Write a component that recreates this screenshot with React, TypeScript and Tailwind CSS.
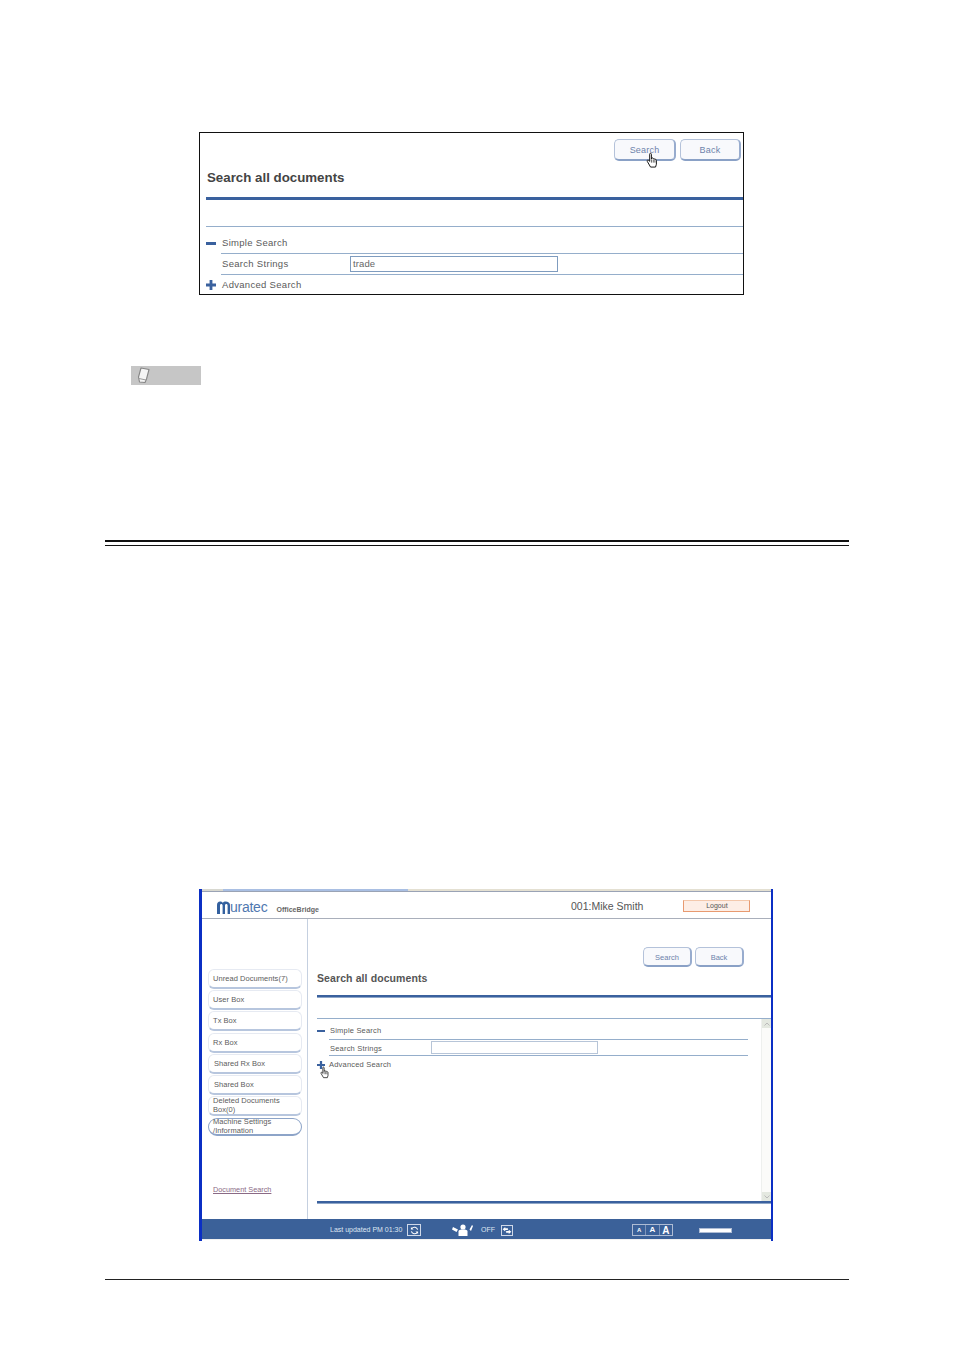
import React from "react";

const font = "font-['Liberation_Sans',Arial,sans-serif]";

function Hand({ className }: { className: string }) {
  return (
    <svg viewBox="0 0 12 16" className={className}>
      <path
        d="M3.5 1.2c.7-.6 1.5-.2 1.5.6v4.4l.3-.9c.8-.4 1.3 0 1.4.6.7-.4 1.3-.1 1.4.6.8-.3 1.5.1 1.5.9v3.6l-.8 2.6H4.2L1.2 8.4c-.5-.8.3-1.6 1.1-1l1.1.9V1.8z"
        fill="#fff"
        stroke="#111"
        strokeWidth="0.9"
        strokeLinejoin="round"
      />
      <path d="M5 6.5v3M6.7 6.5v3M8.2 7v2.5" stroke="#111" strokeWidth="0.6" fill="none" />
    </svg>
  );
}

function Plus({ className }: { className: string }) {
  return (
    <svg viewBox="0 0 10 10" className={className}>
      <path d="M3.6 0h2.8v3.6H10v2.8H6.4V10H3.6V6.4H0V3.6h3.6z" fill="#3a619e" />
    </svg>
  );
}

function ActionButton({ label, cls }: { label: string; cls: string }) {
  return (
    <div
      className={`flex items-center justify-center pt-[2px] rounded-[5px] border border-[#b4c2da] border-b-2 border-r-2 border-b-[#8aa1c6] border-r-[#98acce] bg-[#f8f9fc] text-[#6d83ab] ${cls}`}
    >
      {label}
    </div>
  );
}

const sideItems: { label: string; cls: string }[] = [
  { label: "Unread Documents(7)", cls: "h-[20px] pl-[4px]" },
  { label: "User Box", cls: "h-[20px] mt-[1px] pl-[4px]" },
  { label: "Tx Box", cls: "h-[20px] mt-[1px] pl-[4px]" },
  { label: "Rx Box", cls: "h-[20px] mt-[2px] pl-[4px]" },
  { label: "Shared Rx Box", cls: "h-[20px] mt-[1px] pl-[5px]" },
  { label: "Shared Box", cls: "h-[20px] mt-[1px] pl-[5px]" },
  { label: "Deleted Documents Box(0)", cls: "h-[20px] mt-[1px] pl-[4px] pb-[2px]" },
];

export default function App() {
  return (
    <div className={`w-[954px] h-[1347px] bg-white overflow-hidden pt-[132px] ${font}`}>
      {/* First capture */}
      <div className="relative ml-[199px] w-[545px] h-[163px] border border-[#111] flex flex-col text-[#5a5a5a] text-[9.5px] tracking-[0.3px]">
        <div className="mt-[6px] flex justify-end gap-[4px] pr-[2px] text-[9px] tracking-[0.2px]">
          <ActionButton label="Search" cls="w-[62px] h-[22px]" />
          <ActionButton label="Back" cls="w-[61px] h-[22px]" />
        </div>
        <div className="h-[36px] pt-[9px] pl-[7px] text-[13.3px] leading-[16px] font-bold tracking-normal text-[#444]">
          Search all documents
        </div>
        <div className="ml-[6px] h-[3px] bg-[#3a619e]" />
        <div className="h-[26px] ml-[6px] border-b border-[#95aecb] box-content" />
        <div className="h-[26px] pt-[6px] flex items-center pl-[6px]">
          <div className="w-[10px] h-[3px] bg-[#3a619e]" />
          <span className="ml-[6px]">Simple Search</span>
        </div>
        <div className="ml-[21px] h-px bg-[#95aecb]" />
        <div className="h-[20px] flex items-center pl-[22px]">
          <span className="w-[128px]">Search Strings</span>
          <div className="w-[208px] h-[16px] border border-[#7f9cbf] pl-[2px] leading-[14px] tracking-[0.1px] text-[#666]">trade</div>
        </div>
        <div className="ml-[21px] h-px bg-[#95aecb]" />
        <div className="h-[19px] flex items-center pl-[6px] pt-[2px]">
          <Plus className="w-[10px] h-[10px] -mt-[2px]" />
          <span className="ml-[6px]">Advanced Search</span>
        </div>
        <Hand className="absolute left-[446px] top-[19px] w-[13px] h-[18px]" />
      </div>

      {/* Note marker */}
      <div className="mt-[71px] ml-[131px] w-[70px] h-[19px] bg-[#c6c6c6] flex items-center pl-[6px]">
        <svg viewBox="0 0 13 17" className="w-[13px] h-[17px]">
          <path d="M4 1 12 2.5 9.5 12 8 15.5 2.5 15 1.5 10z" fill="#f4f4f4" stroke="#858585" strokeWidth="1.1" strokeLinejoin="round" />
          <path d="M2 11.5 9 13" stroke="#9a9a9a" strokeWidth="1" />
        </svg>
      </div>

      {/* Section rule */}
      <div className="mt-[155px] ml-[105px] w-[744px] h-[2px] bg-[#111]" />
      <div className="mt-[3px] ml-[105px] w-[744px] h-px bg-[#111]" />

      {/* Second capture */}
      <div className="relative mt-[343px] ml-[199px] w-[574px] h-[352px] border-l-[3px] border-r-[2px] border-l-[#0b2fc4] border-r-[#0b2fc4] flex flex-col text-[#5a5a5a]">
        <div className="h-[2px] flex">
          <div className="w-[21px] bg-[#d8d8d0]" />
          <div className="w-[185px] bg-[#a9bfe3]" />
          <div className="flex-1 bg-[#e4e0d2]" />
        </div>
        {/* Header */}
        <div className="h-[28px] border-b border-t border-t-[#9aa3b5] border-b-[#a9afbb] flex items-center pt-[2px]">
          <div className="ml-[15px] mt-[2px] flex items-center text-[#4f78b0]">
            <svg viewBox="0 0 13 13" className="w-[13px] h-[13px]">
              <path d="M0 13V4C0 1.6 1.2.4 3 .4c1.2 0 2.2.5 2.8 1.4C6.4.9 7.4.4 8.7.4 11 .4 13 1.6 13 4v9h-2.4V4.5c0-1-.5-1.6-1.3-1.6s-1.3.6-1.3 1.6V13H5.6V4.5c0-1-.5-1.6-1.3-1.6S3 3.5 3 4.5V13z" fill="#33609f" />
            </svg>
            <span className="text-[14px] leading-[14px] tracking-[-0.25px]">uratec</span>
          </div>
          <span className="ml-[9px] mt-[9px] text-[7px] font-bold text-[#666] tracking-[0.05px]">OfficeBridge</span>
          <span className="ml-[252px] mt-[1px] text-[10.5px] text-[#555]">001:Mike Smith</span>
          <div className="ml-[40px] w-[67px] h-[12px] border border-[#e89a70] border-t-[#f3c8ac] bg-[#fdeee6] flex items-center justify-center text-[7px] text-[#555]">
            Logout
          </div>
        </div>
        {/* Body */}
        <div className="h-[300px] flex">
          <div className="w-[106px] border-r border-[#c5d0e0] pt-[50px] pl-[6px] flex flex-col">
            {sideItems.map((s) => (
              <div
                key={s.label}
                className={`w-[94px] rounded-[6px] border border-[#e6eaf2] border-b-2 border-b-[#b7c6de] flex items-center text-[7.5px] leading-[9px] tracking-[0.05px] text-[#5c5c5c] ${s.cls}`}
              >
                {s.label === "Deleted Documents Box(0)" ? (
                  <span>Deleted Documents<br />Box(0)</span>
                ) : (
                  s.label
                )}
              </div>
            ))}
            <div className="mt-[2px] h-[18px] w-[94px] rounded-[9px] border border-[#8da4c8] border-b-2 pl-[4px] pb-[2px] flex items-center text-[7.5px] leading-[9px] tracking-[0.05px] text-[#5c5c5c]">
              <span>Machine Settings<br />/Information</span>
            </div>
            <div className="mt-[49px] ml-[5px] text-[7.3px] leading-[10px] underline text-[#8a6a85]">Document Search</div>
          </div>
          <div className="flex-1 min-w-0 flex flex-col">
            <div className="mt-[28px] flex justify-end gap-[3px] pr-[27px] text-[7.5px]">
              <ActionButton label="Search" cls="w-[49px] h-[20px]" />
              <ActionButton label="Back" cls="w-[49px] h-[20px]" />
            </div>
            <div className="mt-[4px] ml-[9px] text-[10.5px] leading-[14px] font-bold text-[#555] tracking-[0.1px]">
              Search all documents
            </div>
            <div className="mt-[10px] ml-[9px] h-[2px] bg-[#3a619e] border-b border-[#8ea6c8] box-content" />
            <div className="mt-[20px] ml-[9px] h-px bg-[#95aecb]" />
            <div className="relative ml-[9px] h-[182px] flex">
              <div className="flex-1 min-w-0 text-[7.5px] tracking-[0.2px]">
                <div className="h-[20px] flex items-center pt-[3px]">
                  <div className="w-[8px] h-[2px] bg-[#3a619e]" />
                  <span className="ml-[5px]">Simple Search</span>
                </div>
                <div className="ml-[12px] mr-[13px] h-px bg-[#95aecb]" />
                <div className="h-[15px] flex items-center pl-[13px]">
                  <span className="w-[101px] pt-[2px]">Search Strings</span>
                  <div className="w-[167px] h-[13px] border border-[#b7c5d8]" />
                </div>
                <div className="ml-[12px] mr-[13px] h-px bg-[#95aecb]" />
                <div className="h-[17px] flex items-center">
                  <Plus className="w-[8px] h-[8px]" />
                  <span className="ml-[4px]">Advanced Search</span>
                </div>
              </div>
              <div className="w-[10px] border-l border-[#eef0ee] bg-[#fbfbf9] flex flex-col justify-between">
                <div className="h-[9px] bg-[#e4e8e0] flex items-center justify-center">
                  <svg viewBox="0 0 6 4" className="w-[6px] h-[4px]"><path d="M.5 3.5 3 1l2.5 2.5" stroke="#bbb" fill="none" /></svg>
                </div>
                <div className="h-[9px] bg-[#e4e8e0] flex items-center justify-center">
                  <svg viewBox="0 0 6 4" className="w-[6px] h-[4px]"><path d="M.5 .5 3 3l2.5-2.5" stroke="#bbb" fill="none" /></svg>
                </div>
              </div>
              <Hand className="absolute left-[3px] top-[47px] w-[10px] h-[14px]" />
            </div>
            <div className="ml-[9px] h-[2px] bg-[#3a619e] border-b border-[#8ea6c8] box-content" />
          </div>
        </div>
        {/* Footer */}
        <div className="h-[21px] pt-[2px] bg-[#3b6199] flex items-center text-[7px] text-[#dfe6f2] border-b border-[#f0f0f0] box-border">
          <span className="ml-[128px] w-[76px]">Last updated PM 01:30</span>
          <div className="ml-[1px] w-[14px] h-[12px] border border-[#cfd8e8] flex items-center justify-center">
            <svg viewBox="0 0 10 10" className="w-[9px] h-[9px]">
              <path d="M8.5 4A3.7 3.7 0 0 0 2 2.8M1.5 6A3.7 3.7 0 0 0 8 7.2" stroke="#fff" strokeWidth="1.2" fill="none" />
              <path d="M1 1v3h3zM9 9V6H6z" fill="#fff" />
            </svg>
          </div>
          <svg viewBox="0 0 22 12" className="ml-[31px] w-[22px] h-[12px]">
            <circle cx="11" cy="3" r="2.6" fill="#fff" />
            <path d="M6.5 12V7.5C6.5 6 8 5.5 11 5.5s4.5.5 4.5 2V12z" fill="#fff" />
            <path d="M1 3l5 2.5L4.5 8 0 5.5zM21 2l-2 5-1.5-1.5L20 1z" fill="#fff" />
          </svg>
          <span className="ml-[7px] w-[20px]">OFF</span>
          <div className="w-[12px] h-[11px] border border-[#cfd8e8] flex items-center justify-center">
            <svg viewBox="0 0 10 8" className="w-[10px] h-[7px]">
              <path d="M0 2.5 3 0v1.5h3v2H3V5zM10 5.5 7 3v1.5H4v2h3V8z" fill="#fff" />
            </svg>
          </div>
          <div className="ml-[119px] w-[41px] h-[12px] border border-[#aebcd4] flex font-bold text-white">
            <span className="flex-1 flex items-center justify-center text-[6px]">A</span>
            <span className="flex-1 flex items-center justify-center text-[8px] border-x border-[#7f95ba]">A</span>
            <span className="flex-1 flex items-center justify-center text-[10px]">A</span>
          </div>
          <div className="ml-[26px] w-[33px] h-[5px] bg-white border border-[#aebcd4]" />
        </div>
      </div>

      {/* Page foot rule */}
      <div className="mt-[38px] ml-[105px] w-[744px] h-px bg-[#222]" />
    </div>
  );
}
